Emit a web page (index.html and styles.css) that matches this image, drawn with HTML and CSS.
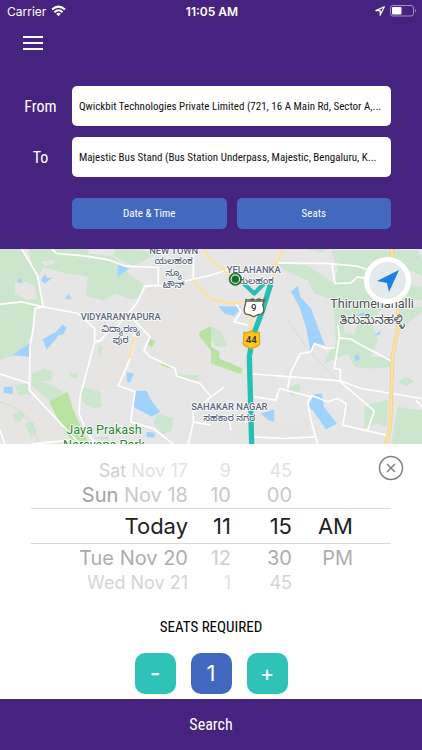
FILE: index.html
```html
<!DOCTYPE html>
<html lang="en">

<head>
    <meta charset="UTF-8">
    <meta name="viewport" content="width=device-width, initial-scale=1">
    <title>Search a ride</title>
    <link rel="stylesheet" href="styles.css">
</head>

<body>

    <header class="top">
        <div class="status">
            <span class="carrier">Carrier
                <svg width="15" height="12" viewBox="0 0 15 12" fill="none" stroke="#fff" stroke-width="2">
                    <path d="M1 4.6Q7.500 -1.400 14 4.600M3.400 7.200Q7.500 3.400 11.600 7.200" />
                    <path d="M5.200 8.800Q7.500 6.900 9.800 8.800L7.500 11.200Z" fill="#fff" stroke="none" />
                </svg>
            </span>
            <span class="clock">11:05 AM</span>
            <span class="indicators">
                <svg width="10" height="10" viewBox="0 0 10 10" fill="none" stroke="#fff" stroke-width="1.200" stroke-linejoin="round">
                    <path d="M9.300 .8L.8 4.600H5.200V9.200Z" />
                </svg>
                <svg width="27" height="12" viewBox="0 0 27 12">
                    <rect x=".5" y=".5" width="23" height="10.500" rx="2.500" fill="none" stroke="#a08fc0" />
                    <rect x="2" y="2" width="9.500" height="7.500" rx="1" fill="#fff" />
                    <path d="M25 4Q27 5.700 25 7.500Z" fill="#a08fc0" />
                </svg>
            </span>
        </div>

        <button class="menu" type="button" aria-label="Menu">
            <svg width="20" height="14" viewBox="0 0 20 14" stroke="#fff" stroke-width="2">
                <path d="M0 1H20M0 7H20M0 13H20" />
            </svg>
        </button>

        <form class="route" id="route">
            <label for="from">From</label>
            <input id="from" type="text" value="Qwickbit Technologies Private Limited (721, 16 A Main Rd, Sector A,...">
            <label for="to">To</label>
            <input id="to" type="text" value="Majestic Bus Stand (Bus Station Underpass, Majestic, Bengaluru, K...">
            <div class="options">
                <button type="button">Date &amp; Time</button>
                <button type="button">Seats</button>
            </div>
        </form>
    </header>

    <main class="map">
        <svg class="map-canvas" viewBox="0 26 1266 586" preserveAspectRatio="xMidYMid slice" role="img" aria-label="Map">
            <rect y="26" width="1266" height="586" fill="#e6e6e6" />
            <!-- west -->
            <g>
                <path class="land" d="M435 140L633 120V470L530 405L440 340L450 290L410 240ZM0 405L90 450L240 600H0ZM290 310L390 320L360 430L245 480Z" />
                <path class="park" d="M0 26H68L112 105L125 195L103 205L98 265L80 320L55 345L0 358ZM85 26H265V108L200 100L130 82L118 105L100 90ZM268 40L340 50L375 85L390 105L430 130L425 165L400 178L345 160L310 180L258 168ZM345 26L430 28L460 45L400 80L340 45ZM95 400L130 385L158 395L155 420L130 425L185 450L205 480L150 485L95 435ZM45 435L80 430L90 462L55 465ZM245 440L300 455L305 500L280 505L245 485ZM470 520L520 535L515 570L490 582L460 550ZM210 400L235 400L232 415L212 412ZM300 315L308 320L300 348L292 335ZM75 550L100 545L110 580L90 592ZM40 520L65 512L75 525L60 545L38 535ZM530 402L595 405L597 422L530 415ZM280 592L330 590L320 602Z" />
                <path class="grass" d="M148 485L203 455L220 510L262 602H215L180 550ZM598 275L633 258V330L598 290ZM485 365L515 375L510 384L482 375ZM452 295L465 305L455 322L442 312Z" />
                <path class="land" d="M45 128L80 125L105 140L110 175L80 180L45 160ZM122 65L160 60L165 68L135 78ZM205 195L238 205L225 225L205 215Z" />
                <path class="water" d="M355 72L388 85L355 110L352 92ZM122 120L135 102L142 114L158 112L135 130ZM52 124L60 113L68 130ZM196 175L206 160L215 178ZM168 275L188 253L200 262L190 282L173 287L170 295L140 328L128 297ZM38 345L90 308L88 350ZM12 440L38 440L38 462L10 458ZM380 396L402 400L388 430L380 420ZM405 452H440L450 475L480 515L455 530L400 500ZM440 575L465 578L462 592L440 590Z" />
                <path class="rail" d="M0 485Q110 520 112 612" />
                <path class="road" d="M155 26L170 40L260 48L330 60L375 78L475 82V135M65 26L112 105L130 200M0 192L65 185L130 200L235 220L284 265V305L240 470L237 520L262 580L290 612M130 200L105 205L100 265L90 320L88 450L240 612M0 402L90 430M284 305L300 302L320 280L355 255L410 190L435 138L500 136L633 105M475 135L435 138M580 26V120M402 240L450 290L432 330L450 350L525 385L530 408L600 430L633 470M405 270L395 345L355 437L405 455L392 545L460 565L520 612M633 470L580 515V545L633 555M580 545L565 612M0 570L15 612M95 612L210 600L240 612" />
                <path class="highway" d="M610 26L633 62M580 118L602 150L633 178M402 290L390 355" />
            </g>
            <!-- east -->
            <g transform="translate(633 0)">
                <path class="land" d="M30 26H250L190 80L120 120ZM0 190L60 230L100 320L20 310ZM60 540L300 545V612H60Z" />
                <path class="park" d="M200 70L290 75L340 110L370 130L372 180L310 160L290 120L220 90ZM360 30H620L633 60V180L540 180L480 240L500 300L480 350L540 350L545 380L480 385L430 380L410 340L340 370L330 400L345 350L375 310L370 240L360 150L380 90ZM560 200H633V215L560 270ZM560 425L585 410L610 425L585 440ZM560 500L633 510V612H540ZM460 500L485 490L530 480V560L500 550L460 565ZM235 440L265 430L270 450L240 468ZM0 258L30 275L50 320L20 320L0 300ZM280 26H350L330 36Z" />
                <path class="grass" d="M0 320L25 335L25 355L95 385L90 402L0 370Z" />
                <path class="land" d="M560 80L600 90L633 110V140L570 130ZM400 240L440 250L430 280L400 280Z" />
                <path class="water" d="M22 198L90 200L70 228L40 220ZM240 155L260 137L268 170L300 205L320 260L342 315L315 310L298 332L285 260L265 200ZM490 285L510 270L505 285ZM430 350L440 342L447 355L435 364ZM310 462L333 460L338 500L378 550L345 568L305 510L290 500ZM150 520L190 508V545L172 540ZM440 225L460 215L465 235Z" />
                <path class="rail" d="M230 240Q300 350 388 425" />
                <path class="road" d="M0 105L60 85M200 68L350 70L440 78L530 110M362 70L372 130L420 128L440 110L500 120M380 250L385 290L370 385L388 388V420M385 293L420 297L460 320L545 365M300 335L310 310L345 325L372 322M300 335L268 340L240 395L230 445M110 400L240 410L388 422L450 445L633 475M130 470L195 480L205 445L300 470L290 485L300 540L320 612M300 465L350 485L380 475L405 490L400 530L395 555L535 587M388 425L490 512L470 570M130 590L220 595L310 590M75 190L90 215L70 245L110 255M0 470L40 440M55 540L60 570M633 500L615 480" />
                <path class="highway" d="M0 62L40 90L75 125M218 26L190 80L185 130M0 178L60 190L100 185M120 220V270L115 300" />
                <path class="highway-edge" d="M542 26L547 80L562 200L560 270L545 345L542 430L538 560L525 612" />
                <path class="highway" d="M542 26L547 80L562 200L560 270L545 345L542 430L538 560L525 612" />
                <path class="trip" d="M85 118L130 160L162 127" stroke-width="13" />
                <path class="trip" d="M179 132L153 215L125 290L115 350L122 612" stroke-width="16" />
            </g>

            <g class="place">
                <text x="521" y="41">NEW TOWN</text>
                <text x="521" y="73">ಯಲಹಂಕ</text>
                <text x="521" y="109">ನ್ಯೂ</text>
                <text x="521" y="144">ಟೌನ್</text>
                <text x="362" y="240">VIDYARANYAPURA</text>
                <text x="362" y="275">ವಿದ್ಯಾರಣ್ಯ</text>
                <text x="362" y="308">ಪುರ</text>
                <text x="761" y="100">YELAHANKA</text>
                <text x="764" y="133">ಯಲಹಂಕ</text>
                <text x="688" y="511">SAHAKAR NAGAR</text>
                <text x="688" y="544">ಸಹಕಾರ ನಗರ</text>
            </g>
            <g class="town">
                <text x="1116" y="204">Thirumenahalli</text>
                <text x="1116" y="252">ತಿರುಮೆನಹಳ್ಳಿ</text>
            </g>
            <g class="town town-park">
                <text x="312" y="582">Jaya Prakash</text>
                <text x="312" y="626">Narayana Park</text>
            </g>

            <circle cx="706" cy="117" r="17" fill="#e6efe6" stroke="#17722c" stroke-width="5" />
            <circle cx="706" cy="117" r="11" fill="#17722c" />
            <path d="M738 178Q748 182 758 176Q766 184 776 176Q786 182 794 178L788 194Q796 216 784 222Q772 222 761 230Q750 222 738 222Q728 214 736 194Z" fill="#fff" stroke="#665f4c" stroke-width="4" />
            <path d="M738 180Q748 184 758 178Q766 186 776 178Q786 184 792 180V185H738Z" fill="#59634b" />
            <path d="M732 277Q744 279 754 273Q768 279 778 277L779 310Q779 318 754 325Q730 318 730 310Z" fill="#fdc521" stroke="#e0a810" stroke-width="4" />
            <text class="shield" x="761" y="212">9</text>
            <text class="shield" x="754" y="309">44</text>
        </svg>
        <button class="locate" type="button" aria-label="My location">
            <svg width="24" height="24" viewBox="0 0 24 24" fill="#1b7fe3">
                <path d="M23 1L1 12L11 14L13 23Z" />
            </svg>
        </button>
    </main>

    <section class="sheet">
        <button class="close" type="button" aria-label="Close">
            <svg width="26" height="26" viewBox="0 0 26 26" fill="none" stroke="#808080" stroke-width="1.500">
                <circle cx="13" cy="13" r="11.500" />
                <path d="M9 9L17 17M17 9L9 17" />
            </svg>
        </button>

        <div class="picker">
            <div class="row far"><span><b>Sat</b> Nov 17</span><span>9</span><span>45</span></div>
            <div class="row near"><span><b>Sun</b> Nov 18</span><span>10</span><span>00</span></div>
            <div class="row chosen"><span>Today</span><span>11</span><span>15</span><span>AM</span></div>
            <div class="row near after"><span>Tue Nov 20</span><span class="dim">12</span><span>30</span><span>PM</span></div>
            <div class="row far after"><span>Wed Nov 21</span><span class="dim">1</span><span>45</span></div>
        </div>

        <h2>SEATS REQUIRED</h2>
        <div class="seats">
            <button class="step minus" type="button" aria-label="Fewer seats">-</button>
            <output class="count">1</output>
            <button class="step" type="button" aria-label="More seats">+</button>
        </div>
    </section>

    <button class="search" type="submit" form="route">Search</button>

</body>

</html>
```
FILE: styles.css
```css
* {
    box-sizing: border-box;
}

body {
    margin: 0;
    min-height: 100vh;
    display: flex;
    flex-direction: column;
    background-color: #fff;
    font-family: "Roboto Condensed", "Liberation Sans Narrow", "Liberation Sans", sans-serif;
}

button,
input {
    font: inherit;
    border: 0;
}

button {
    padding: 0;
    cursor: pointer;
}

svg {
    display: block;
}

.top {
    background-color: #46237f;
    color: #fff;
    padding-bottom: 20px;
}

.status {
    height: 22px;
    padding: 0 5px 0 7px;
    display: grid;
    grid-template-columns: 1fr auto 1fr;
    align-items: center;
    font-family: Inter, sans-serif;
    font-size: 12px;
}

.carrier,
.indicators {
    display: flex;
    align-items: center;
    gap: 5px;
}

.indicators {
    justify-content: flex-end;
}

.clock {
    font-weight: 600;
}

.menu {
    display: block;
    margin: 14px 0 0 23px;
    background: none;
}

.route {
    margin: 36px 31px 0 0;
    display: grid;
    grid-template-columns: 72px 1fr;
    row-gap: 11px;
    align-items: center;
}

.route label {
    padding-left: 9px;
    text-align: center;
    font-size: 16px;
}

.route input {
    width: 100%;
    min-width: 0;
    height: 40px;
    padding: 0 7px;
    border-radius: 5px;
    background-color: #fff;
    color: #111;
    font-size: 11px;
    text-overflow: ellipsis;
}

.options {
    grid-column: 2;
    margin-top: 10px;
    display: grid;
    grid-template-columns: 1fr 1fr;
    gap: 10px;
}

.options button {
    height: 31px;
    border-radius: 5px;
    background-color: #4268bf;
    color: #fff;
    font-size: 11px;
}

.map {
    flex: 1;
    min-height: 195px;
    position: relative;
    overflow: hidden;
}

.map-canvas {
    position: absolute;
    width: 100%;
    height: 100%;
}

.land {
    fill: #e7e5e3;
}

.park {
    fill: #cbe6cd;
}

.grass {
    fill: #b9e3a0;
}

.water {
    fill: #9fd2fd;
}

.road,
.highway,
.highway-edge,
.rail,
.trip {
    fill: none;
    stroke-linejoin: round;
}

.road {
    stroke: #fff;
    stroke-width: 5px;
}

.rail {
    stroke: #d2d2d2;
    stroke-width: 2px;
}

.highway {
    stroke: #fce1a0;
    stroke-width: 7px;
}

.highway-edge {
    stroke: #f3d084;
    stroke-width: 11px;
}

.trip {
    stroke: #25bfb5;
}

.place,
.town {
    font-family: Roboto, "Noto Sans Kannada", "Noto Sans", sans-serif;
    text-anchor: middle;
    fill: #5b667c;
    stroke: #fff;
    stroke-width: 5px;
    stroke-linejoin: round;
    paint-order: stroke;
}

.place {
    font-size: 28px;
    font-weight: 500;
}

.town {
    font-size: 38px;
    fill: #4c4f55;
}

.town-park {
    fill: #2c8535;
}

.shield {
    font-family: Roboto, sans-serif;
    font-size: 29px;
    font-weight: 500;
    text-anchor: middle;
    fill: #333;
}

.locate {
    position: absolute;
    top: 8px;
    right: 11px;
    width: 47px;
    height: 47px;
    border: 5px solid #fff;
    border-radius: 50%;
    background-color: #e4e9ec;
    display: grid;
    place-items: center;
}

.sheet {
    position: relative;
    padding: 15px 31px 5px;
    background-color: #fff;
}

.close {
    position: absolute;
    top: 11px;
    right: 18px;
    background: none;
}

.picker {
    font-family: Inter, sans-serif;
    color: #c9c9c9;
}

.row {
    display: grid;
    grid-template-columns: 157fr 43fr 61fr 61fr 38fr;
    align-items: center;
    text-align: right;
    white-space: nowrap;
}

.row b {
    font-weight: 400;
    color: #a3a3a3;
}

.far {
    height: 22px;
    font-size: 18px;
    color: #e2e2e2;
}

.far b {
    color: #cfcfcf;
}

.near {
    height: 27px;
    font-size: 20px;
}

.near.after {
    color: #adadad;
}

.far.after {
    color: #d4d4d4;
}

.near .dim {
    color: #cfcfcf;
}

.far .dim {
    color: #e2e2e2;
}

.chosen {
    height: 36px;
    border-top: 1px solid #d8d8d8;
    border-bottom: 1px solid #d8d8d8;
    color: #222;
    font-size: 22px;
}

.sheet h2 {
    margin: 24px 0 16px;
    text-align: center;
    font-size: 15px;
    font-weight: 400;
    line-height: 20px;
}

.seats {
    display: flex;
    justify-content: center;
    gap: 15px;
}

.step,
.count {
    width: 41px;
    height: 41px;
    border-radius: 10px;
    background-color: #2ec2b9;
    color: #fff;
    font-family: Inter, sans-serif;
    font-size: 22px;
    line-height: 41px;
    text-align: center;
}

.minus {
    font-weight: 600;
}

.count {
    background-color: #4267bf;
}

.search {
    height: 51px;
    background-color: #46237f;
    color: #fff;
    font-size: 16px;
}
```
